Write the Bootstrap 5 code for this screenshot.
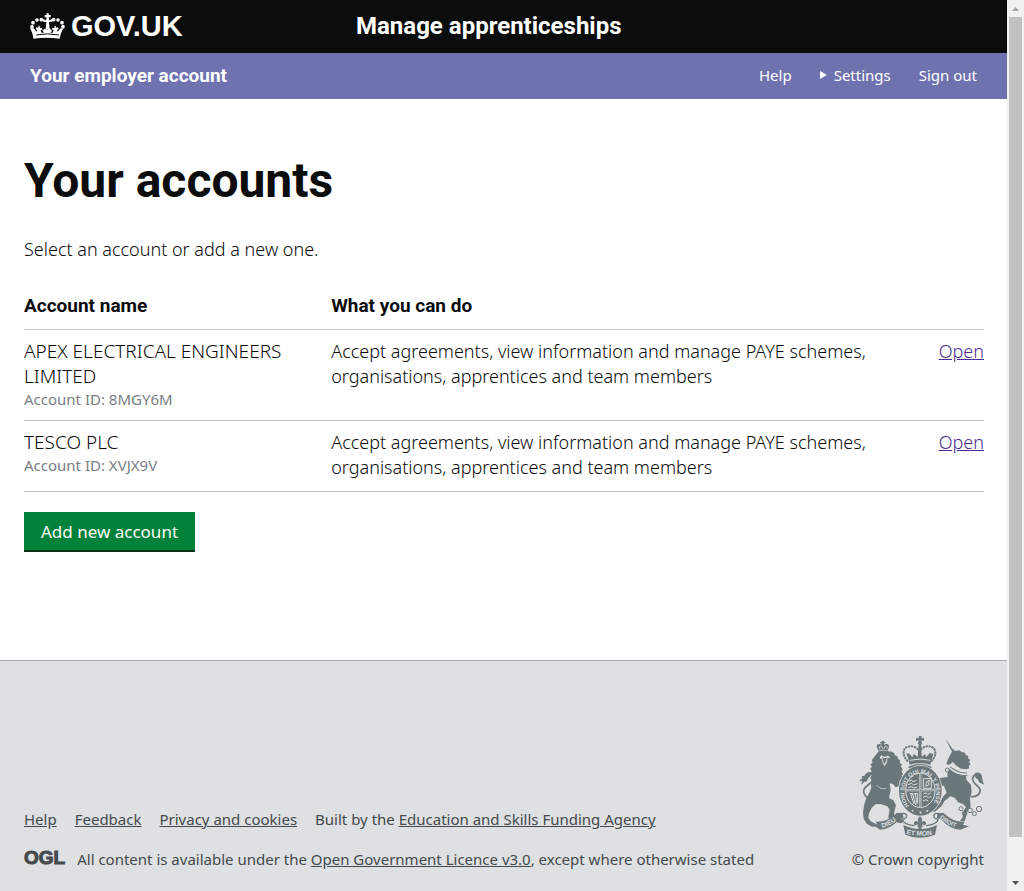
<!DOCTYPE html>
<html lang="en">
<head>
<meta charset="utf-8">
<meta name="viewport" content="width=device-width, initial-scale=1">
<title>Your accounts - Manage apprenticeships</title>
<link href="https://cdn.jsdelivr.net/npm/bootstrap@5.3.0/dist/css/bootstrap.min.css" rel="stylesheet">
<style>
  :root { --ink: #0b0c0c; --bar: #6f72af; --foot: #454a4d; --rule: #bfc1c3; }
  body { font-family: "Noto Sans", sans-serif; font-size: 18px; font-weight: 350; line-height: 25px; color: var(--ink); background: #fff; }
  .strong-type { font-family: Roboto, "Noto Sans", sans-serif; font-weight: 700; }
  .page-col { min-width: 0; }
  .top-bar { background: var(--ink); min-height: 53px; padding: 0 30px 2px; }
  .brand-side { flex: 0 0 326px; padding-top: 4px; }
  .brand-link { font-family: "Liberation Sans", sans-serif; font-weight: 700; font-size: 29px; line-height: 32px; gap: 6px; }
  .service-name { font-size: 24px; line-height: 28px; }
  .account-bar { background: var(--bar); min-height: 46px; padding: 0 30px 2px; }
  .account-name { font-size: 19px; }
  .account-menu { font-size: 15px; font-weight: 400; gap: 28px; }
  .settings-toggle { gap: 7px; }
  .page-main, .foot-inner { max-width: 1008px; padding-left: 24px; padding-right: 23px; }
  .page-main { padding-top: 54px; padding-bottom: 108px; }
  h1 { font-size: 48px; line-height: 56px; margin-bottom: 28px; }
  .intro { margin-bottom: 22px; }
  .accounts { margin-bottom: 20px; }
  .accounts th, .accounts td { padding: 9px 0 11px; border-bottom: 1px solid var(--rule); vertical-align: top; }
  .accounts th { font-size: 19px; }
  .col-name { width: 32%; }
  .col-open { width: 11%; }
  .accounts tbody th { font-weight: inherit; }
  .account-id { font-size: 15px; font-weight: 400; line-height: 20px; color: #7a8084; }
  .open-link { color: #4c2c92; }
  .btn-start { background: #00823b; color: #fff; border: 0; border-radius: 0; box-shadow: inset 0 -2px 0 #003618; padding: 7px 17px 8px; font-size: 17px; line-height: 25px; font-weight: 400; }
  .btn-start:hover { background: #006b30; color: #fff; }
  .page-foot { background: #dee0e2; border-top: 1px solid #a1acb2; color: var(--foot); font-size: 15px; font-weight: 400; line-height: 20px; }
  .foot-inner { padding-top: 75px; padding-bottom: 22px; }
  .page-foot a { color: var(--foot); }
  .foot-links { gap: 18px; margin-bottom: 20px; }
  .ogl { font: 700 19px/18px "Liberation Sans", sans-serif; -webkit-text-stroke: 1px var(--foot); margin-right: 12px; }
  .copy { gap: 11px; }
  .arms text { font-family: "Liberation Sans", sans-serif; font-weight: 700; fill: #dee0e2; }
  .scroll-rail { flex: 0 0 17px; background: #f1f1f1; height: 100vh; top: 0; padding: 0 2px; }
  .scroll-btn { height: 17px; }
  .scroll-thumb { background: #c1c1c1; flex: 820 0 0; }
  .scroll-gap { flex: 37 0 0; }
</style>
</head>
<body>
<div class="d-flex">
  <div class="page-col flex-grow-1 min-vh-100 d-flex flex-column">
    <header>
      <div class="top-bar d-flex align-items-center">
        <div class="brand-side">
          <a class="brand-link d-inline-flex align-items-center text-white text-decoration-none" href="#">
            <svg width="35" height="26" viewBox="90 38 105 78" fill="#fff" aria-hidden="true">
              <path d="M139 39h7v5h6v7h-6l2 9 9-4v8l-10 1 1 9c0 8 1 16 8 21l-9-1-4-7-4 7-9 1c7-5 8-13 8-21l1-9-10-1v-8l9 4 2-9h-6v-7h6z"/>
              <circle cx="96" cy="79" r="5.500"/><circle cx="99" cy="67" r="5.500"/><circle cx="111" cy="59" r="5.500"/><circle cx="124" cy="58" r="5.500"/>
              <circle cx="189" cy="79" r="5.500"/><circle cx="186" cy="67" r="5.500"/><circle cx="174" cy="59" r="5.500"/><circle cx="161" cy="58" r="5.500"/>
              <path d="M94 84h7l9 10 2-5-5-3 2-5 6 1 1-6h3l1 7 6-1 1 5-5 3 3 7 6 1-1-4-3-4 6-4 4 3h9l4-3 6 4-3 4-1 4 6-1 3-7-5-3 1-5 6 1 1-7h3l1 6 6-1 2 5-5 3 2 5 9-10h7c-3 10-9 20-10 31q-39-6-79 0c-1-11-4-21-10-31z"/>
              <path d="M109 104q34-7 68 0" fill="none" stroke="#0b0c0c" stroke-width="3"/>
              <path d="M133 104h19v7h-19z"/>
            </svg>
            <span>GOV.UK</span>
          </a>
        </div>
        <a class="service-name strong-type text-white text-decoration-none" href="#">Manage apprenticeships</a>
      </div>
      <nav class="account-bar d-flex align-items-center justify-content-between" aria-label="Account">
        <a class="account-name strong-type text-white text-decoration-none" href="#">Your employer account</a>
        <ul class="account-menu list-unstyled d-flex align-items-center mb-0">
          <li><a class="text-white text-decoration-none" href="#">Help</a></li>
          <li><a class="settings-toggle d-flex align-items-center text-white text-decoration-none" href="#"><svg width="7" height="8" viewBox="0 0 7 8" aria-hidden="true"><path d="M0 0l7 4-7 4z" fill="#fff"/></svg>Settings</a></li>
          <li><a class="text-white text-decoration-none" href="#">Sign out</a></li>
        </ul>
      </nav>
    </header>

    <main class="page-main container-fluid">
      <h1 class="strong-type">Your accounts</h1>
      <p class="intro">Select an account or add a new one.</p>
      <table class="accounts w-100">
        <thead>
          <tr class="strong-type"><th class="col-name" scope="col">Account name</th><th scope="col">What you can do</th><th class="col-open"></th></tr>
        </thead>
        <tbody>
          <tr>
            <th scope="row">APEX ELECTRICAL ENGINEERS LIMITED<div class="account-id">Account ID: 8MGY6M</div></th>
            <td>Accept agreements, view information and manage PAYE schemes, organisations, apprentices and team members</td>
            <td class="text-end"><a class="open-link" href="#">Open</a></td>
          </tr>
          <tr>
            <th scope="row">TESCO PLC<div class="account-id">Account ID: XVJX9V</div></th>
            <td>Accept agreements, view information and manage PAYE schemes, organisations, apprentices and team members</td>
            <td class="text-end"><a class="open-link" href="#">Open</a></td>
          </tr>
        </tbody>
      </table>
      <button type="button" class="btn btn-start d-block">Add new account</button>
    </main>

    <footer class="page-foot flex-grow-1">
      <div class="foot-inner container-fluid d-flex align-items-end justify-content-between">
        <div>
          <ul class="foot-links list-unstyled d-flex flex-wrap">
            <li><a href="#">Help</a></li>
            <li><a href="#">Feedback</a></li>
            <li><a href="#">Privacy and cookies</a></li>
            <li>Built by the <a href="#">Education and Skills Funding Agency</a></li>
          </ul>
          <div class="d-flex">
            <span class="ogl">OGL</span>
            <span>All content is available under the <a href="#">Open Government Licence v3.0</a>, except where otherwise stated</span>
          </div>
        </div>
        <div class="copy d-flex flex-column align-items-end">
          <svg class="arms" width="125" height="102" viewBox="57 48 375 306" fill="#6b777b" role="img" aria-label="Royal coat of arms">
            <g transform="translate(48 36)">
              <!-- lion crown -->
              <path d="M80 26h4v4h4v4h-4v4c9-5 18 0 14 9l-3 9q-14-5-27 0l-5-9c-4-9 5-14 13-9v-4h-4v-4h4z"/>
              <path d="M71 50c-4-6 2-10 6-6l2 6M93 50c3-6-3-9-7-6l-2 6" fill="none" stroke="#dee0e2" stroke-width="3"/>
              <!-- lion: mane and body -->
              <path d="M68 58q14-5 29 0l12 1 8 7-2 3 11 5-2 4 9 8-3 3 8 10-4 3 7 12-5 2 6 12-5 1 3 16-8-2-4 20-9 3-8-10-10-2 3 20-5 24 13 7 8 14-4 16-2 14 8 9 13 3 9 7-9 6-16-4-18-5-4-10 4-22-7-10-20-7-16 1-11 11-8 16-2 15 9 10 16 8 2 6-15 1-16-8-10-15-2-20 4-24 6-19 9-16 6-14-2-14 2-12-4-4 5-8-5-5 5-8-5-6 6-7-5-6 7-7-3-6z"/>
              <path d="M75 70l10 4 12-3 6 6-9 2-1 12-7 11-5-6-3-14-7-4z" fill="#dee0e2"/>
              <path d="M78 76l8 3 9-3-4 5-2 10-4 6-3-9z"/>
              <path d="M62 160q12 14 28 10" fill="none" stroke="#dee0e2" stroke-width="2"/>
              <!-- lion tail -->
              <path d="M38 198c-14-6-18-19-13-28 7-11 28-20 31-33 2-13-8-18-16-12" fill="none" stroke="#6b777b" stroke-width="5"/>
              <path d="M48 121c-10-4-21 2-23 12l-8-2 2 8-10 7 9 1-2 11 8-8 9-2 4-10 9-10z"/>
              <!-- unicorn: horn, head and mane -->
              <path d="M267 19l27 38-5 4z"/>
              <path d="M287 61l5-11 4 7 14-2 7 5 10 2 2 7 8 3-1 7 7 5-4 6 5 7-6 4 2 8-8 3-17-2-16-10-8-10-12 9-8-3 4-12z"/>
              <path d="M283 104l46 26 3 15 13 14 2 22-5 20 2 23-11 16-3 15-4 13-14-1 8-11 2-18 8-13-9-9-15-5-9-13-14-5-18 15-8 14-12 10-8 7-14-2 7-8 10-1 13-17 8-17 11-12-8-20-11-2-11 13-13 3-2 5-8-3 4-9 11-4 8-9-17-4-4-12-10-5-2-7 8-3-3-5 11 1 7 5 4 10 17 2 22-3-1-10z"/>
              <path d="M282 108q22 20 52 19" fill="none" stroke="#dee0e2" stroke-width="9"/>
              <path d="M283 105q22 19 50 18M280 112q24 21 54 19" fill="none" stroke="#6b777b" stroke-width="3"/>
              <!-- unicorn tail -->
              <path d="M345 194c17 2 30-10 27-22-4-12-23-17-22-32 1-10 10-15 18-11" fill="none" stroke="#6b777b" stroke-width="5"/>
              <path d="M356 124c10-5 21-1 22 9l2 15 5 10-14-6-6-10-7-5z"/>
              <g fill="none" stroke="#6b777b" stroke-width="3"><circle cx="274" cy="114" r="6"/><circle cx="337" cy="168" r="5"/><circle cx="336" cy="207" r="5"/><circle cx="315" cy="230" r="6"/><circle cx="326" cy="244" r="7"/><circle cx="342" cy="235" r="7"/><circle cx="355" cy="245" r="6"/><circle cx="369" cy="231" r="8"/></g>
            </g>
            <!-- central crown -->
            <path d="M236 48h9l-1 7 8-2v10l-8-2 2 11h-12l2-11-8 2V53l9 2z"/>
            <path d="M204 124c-15-13-18-34-5-42 15-8 33 0 39 12 7-12 25-20 39-12 14 8 11 29-4 42" fill="none" stroke="#6b777b" stroke-width="6" stroke-dasharray="7 2"/>
            <path d="M236 72h8l1 38 11-8 2 10 12-14 7 4 4-3-5 16-5 19q-31-8-62 0l-5-19-5-16 10 3 8 10 4-10 12 8z"/>
            <path d="M209 121q31-8 62 0" fill="none" stroke="#dee0e2" stroke-width="3"/>
            <path d="M204 142c20-13 52-13 72 0l-8 5q-28-12-56 0z"/>
            <!-- garter -->
            <ellipse cx="241" cy="212" rx="66" ry="77" fill="#dee0e2"/>
            <ellipse cx="241" cy="212" rx="64" ry="75"/>
            <ellipse cx="241" cy="211" rx="44" ry="52" fill="none" stroke="#dee0e2" stroke-width="3"/>
            <path id="garter" d="M207 257A48 57 0 1 1 277 254" fill="none"/>
            <text font-size="17"><textPath href="#garter">HONI SOIT QUI MAL Y PENSE</textPath></text>
            <path d="M241 162v98M199 211h84" fill="none" stroke="#dee0e2" stroke-width="6"/>
            <path d="M241 162v98M199 211h84" fill="none" stroke="#6b777b" stroke-width="2"/>
            <g fill="none" stroke="#dee0e2" stroke-width="3"><path d="M206 184l8-4 5 5 10-4M204 194l10-4 7 5 11-4M205 203l9-3 8 4 10-3M250 176h24v29h-24zM257 199l3-14 8-4-2 14zM209 220q12 4 24 0v28M212 222l10 30M218 222l9 33M226 222l5 31M250 222l8-4 5 5 9-4M249 232l9-4 7 5 9-4M249 243l9-4 7 4"/></g>
            <path d="M215 269l8 4-7 2zM237 275l9 0-4 7zM257 272l9-3-4 8z" fill="#dee0e2"/>
            <!-- fleur-de-lis -->
            <path d="M240 288l7 10-3 10c4-8 15-6 14 3-1 6-8 7-9 1l-4 5 6 2-7 3 2 9h-12l2-9-7-3 6-2-4-5c-1 6-9 5-9-1-1-9 10-11 14-3l-3-10z"/>
            <!-- motto ribbon -->
            <path d="M107 305q35 2 64-27l17 3 3 14-13 3q-27 31-58 31l-21-14 13-1z"/>
            <path d="M374 305q-35 2-64-27l-17 3-3 14 13 3q27 31 58 31l26-10-18-5z"/>
            <path d="M176 282c30-7 29 11 11 17 2 9 18 16 36 18M305 282c-30-7-29 11-11 17-2 9-18 16-36 18" fill="none" stroke="#6b777b" stroke-width="4"/>
            <path d="M190 315q51 24 101 0l-6 29q-46 19-89 0z"/>
            <path id="motto-left" d="M127 324q28-8 50-30" fill="none"/><path id="motto-mid" d="M199 342q42 10 90 0" fill="none"/><path id="motto-right" d="M299 293q22 24 60 32" fill="none"/>
            <text font-size="20"><textPath href="#motto-left">DIEU</textPath></text>
            <text font-size="20"><textPath href="#motto-mid">ET MON</textPath></text>
            <text font-size="18"><textPath href="#motto-right">DROIT</textPath></text>
          </svg>
          <a class="text-decoration-none text-nowrap" href="#">© Crown copyright</a>
        </div>
      </div>
    </footer>
  </div>

  <div class="scroll-rail position-sticky d-flex flex-column" aria-hidden="true">
    <div class="scroll-btn d-flex align-items-center justify-content-center"><svg width="7" height="4" viewBox="0 0 7 4"><path d="M0 4l3.500-4L7 4z" fill="#a3a3a3"/></svg></div>
    <div class="scroll-thumb"></div>
    <div class="scroll-gap"></div>
    <div class="scroll-btn d-flex align-items-center justify-content-center"><svg width="7" height="4" viewBox="0 0 7 4"><path d="M0 0l3.500 4L7 0z" fill="#505050"/></svg></div>
  </div>
</div>
<script src="https://cdn.jsdelivr.net/npm/bootstrap@5.3.0/dist/js/bootstrap.bundle.min.js"></script>
</body>
</html>
